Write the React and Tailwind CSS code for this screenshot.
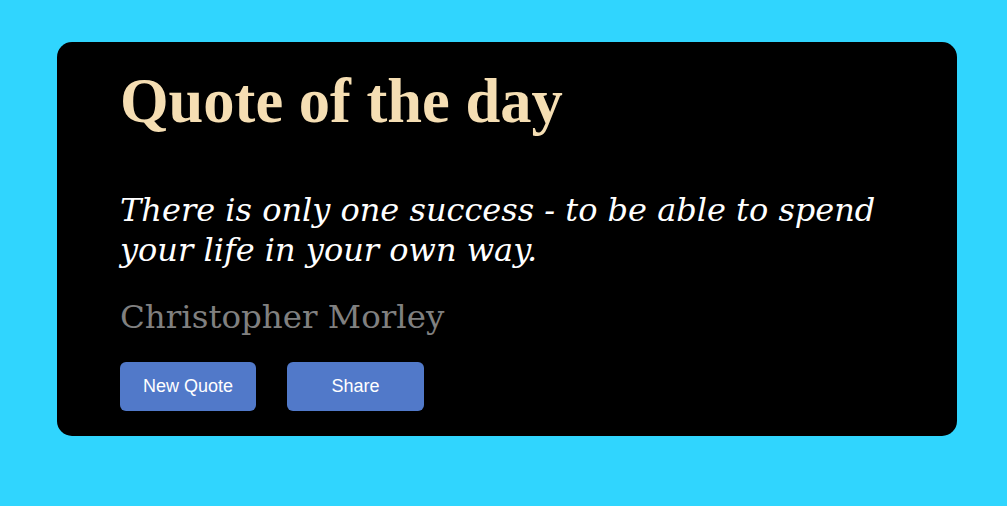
export default function App() {
  return (
    <div className="min-h-[506px] w-full bg-[#30d5fe] pt-[42px]">
      <div className="mx-[57px] h-[394px] w-[900px] rounded-[15px] bg-black pl-[63px] pr-[63px] pt-[14px]">
        <h1 className="text-[62.5px] font-bold leading-[90px] text-[#f5deb3]" style={{ fontFamily: '"Liberation Serif", serif' }}>
          Quote of the day
        </h1>
        <p className="mt-[44px] text-[32px] italic leading-[40px] text-white" style={{ fontFamily: '"DejaVu Serif", serif' }}>
          There is only one success - to be able to spend your life in your own way.
        </p>
        <p className="mt-[22px] text-[32.5px] leading-[50px] text-[#808080]" style={{ fontFamily: '"DejaVu Serif", serif' }}>
          Christopher Morley
        </p>
        <div className="mt-[20px] flex gap-[31px]" style={{ fontFamily: '"Liberation Sans", Arial, sans-serif' }}>
          <button className="h-[49px] w-[136px] rounded-[6px] bg-[#5179c9] text-[18px] text-white">New Quote</button>
          <button className="h-[49px] w-[137px] rounded-[6px] bg-[#5179c9] text-[18px] text-white">Share</button>
        </div>
      </div>
    </div>
  );
}
